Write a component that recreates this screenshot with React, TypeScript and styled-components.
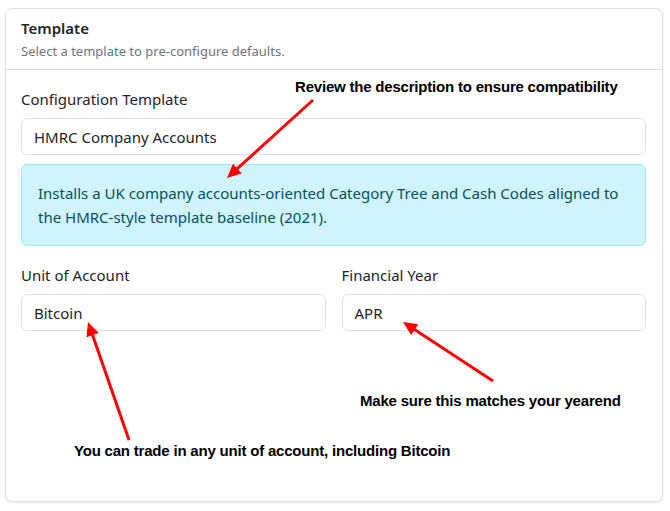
import styled, { createGlobalStyle } from "styled-components";

const GlobalStyle = createGlobalStyle`
  html, body {
    margin: 0;
    padding: 0;
    background: #ffffff;
  }
  body {
    font-family: "Noto Sans", "Open Sans", sans-serif;
    color: #212529;
  }
`;

const Page = styled.div`
  position: relative;
  width: 670px;
  height: 511px;
  padding: 8px 7px 9px 5px;
  box-sizing: border-box;
`;

const Card = styled.section`
  height: 100%;
  box-sizing: border-box;
  border: 1px solid #dcdfe3;
  border-radius: 7px;
  box-shadow: 0 1px 2px rgba(0, 0, 0, 0.08);
  background: #ffffff;
  overflow: hidden;
`;

const CardHeader = styled.header`
  padding: 8px 16px 8px 15px;
  border-bottom: 1px solid #dcdfe3;
`;

const Title = styled.h2`
  margin: 0;
  font-size: 15px;
  font-weight: 600;
  line-height: 22px;
  color: #212529;
`;

const Subtitle = styled.p`
  margin: 2px 0 0;
  font-size: 13px;
  line-height: 20px;
  color: #6c757d;
`;

const CardBody = styled.div`
  padding: 18px 16px 16px 15px;
  display: flex;
  flex-direction: column;
`;

const Field = styled.div`
  display: flex;
  flex-direction: column;
  gap: 8px;
`;

const Label = styled.label`
  font-size: 15px;
  line-height: 22px;
  color: #212529;
`;

const Input = styled.div`
  height: 37px;
  box-sizing: border-box;
  display: flex;
  align-items: center;
  padding: 0 12px;
  border: 1px solid #dee2e6;
  border-radius: 6px;
  font-size: 15px;
  color: #212529;
`;

const Info = styled.div`
  margin-top: 9px;
  padding: 16px;
  border: 1px solid #9eeaf9;
  border-radius: 6px;
  background: #cff4fc;
  color: #055160;
  font-size: 15px;
  line-height: 24px;
`;

const Row = styled.div`
  margin-top: 18px;
  display: grid;
  grid-template-columns: 1fr 1fr;
  gap: 16px;
`;

const Overlay = styled.svg`
  position: absolute;
  inset: 0;
  pointer-events: none;
`;

const Note = styled.div<{ $x: number; $y: number }>`
  position: absolute;
  left: ${({ $x }) => $x}px;
  top: ${({ $y }) => $y}px;
  font-family: "Liberation Sans", Arial, sans-serif;
  font-weight: 700;
  font-size: 15px;
  line-height: 17px;
  color: #000000;
  white-space: nowrap;
  letter-spacing: -0.2px;
`;

type ArrowProps = { from: [number, number]; to: [number, number] };

const Arrow = ({ from, to }: ArrowProps) => {
  const dx = to[0] - from[0];
  const dy = to[1] - from[1];
  const len = Math.hypot(dx, dy);
  const ux = dx / len;
  const uy = dy / len;
  const bx = to[0] - ux * 14;
  const by = to[1] - uy * 14;
  const nx = -uy * 6.5;
  const ny = ux * 6.5;
  return (
    <g>
      <line
        x1={from[0]}
        y1={from[1]}
        x2={bx + ux * 2}
        y2={by + uy * 2}
        stroke="#ff0000"
        strokeWidth={3}
      />
      <polygon
        points={`${to[0]},${to[1]} ${bx + nx},${by + ny} ${bx - nx},${by - ny}`}
        fill="#ff0000"
      />
    </g>
  );
};

const App = () => {
  return (
    <Page>
      <GlobalStyle />
      <Card>
        <CardHeader>
          <Title>Template</Title>
          <Subtitle>Select a template to pre-configure defaults.</Subtitle>
        </CardHeader>
        <CardBody>
          <Field>
            <Label>Configuration Template</Label>
            <Input>HMRC Company Accounts</Input>
          </Field>
          <Info>
            Installs a UK company accounts-oriented Category Tree and Cash Codes
            aligned to the HMRC-style template baseline (2021).
          </Info>
          <Row>
            <Field>
              <Label>Unit of Account</Label>
              <Input>Bitcoin</Input>
            </Field>
            <Field>
              <Label>Financial Year</Label>
              <Input>APR</Input>
            </Field>
          </Row>
        </CardBody>
      </Card>

      <Overlay width={670} height={511}>
        <Arrow from={[313, 100]} to={[227, 178]} />
        <Arrow from={[129, 440]} to={[88, 322]} />
        <Arrow from={[493, 381]} to={[403, 322]} />
      </Overlay>
      <Note $x={295} $y={78}>
        Review the description to ensure compatibility
      </Note>
      <Note $x={360} $y={392}>
        Make sure this matches your yearend
      </Note>
      <Note $x={74} $y={442}>
        You can trade in any unit of account, including Bitcoin
      </Note>
    </Page>
  );
};

export default App;
